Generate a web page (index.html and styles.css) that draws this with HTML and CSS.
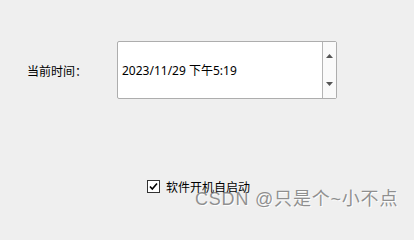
FILE: index.html
```html
<!DOCTYPE html>
<html>
<head>
<meta charset="utf-8">
<link rel="stylesheet" href="styles.css">
</head>
<body>
<div class="page">
  <div class="row">
    <div class="label">当前时间：</div>
    <div class="spin">
      <div class="spin-text">2023/11/29 下午5:19</div>
      <div class="spin-btns">
        <div class="btn"><svg width="7" height="4" viewBox="0 0 7 4"><path d="M0 4 L3.5 0 L7 4 Z" fill="#555"/></svg></div>
        <div class="btn"><svg width="7" height="4" viewBox="0 0 7 4"><path d="M0 0 L3.5 4 L7 0 Z" fill="#555"/></svg></div>
      </div>
    </div>
  </div>
  <div class="check-row">
    <div class="checkbox"><svg width="13" height="13" viewBox="0 0 13 13"><rect x="0.5" y="0.5" width="12" height="12" fill="#fff" stroke="#333"/><path d="M3 6.5 L5.3 9 L10 3.5" fill="none" stroke="#000" stroke-width="1.6"/></svg></div>
    <div class="check-label">软件开机自启动</div>
  </div>
</div>
<div class="watermark">CSDN @只是个~小不点</div>
</body>
</html>
```
FILE: styles.css
```css
html, body {
  margin: 0;
  padding: 0;
  background: #efefef;
  width: 414px;
  height: 214px;
  overflow: hidden;
  font-family: "Noto Sans", "Noto Sans CJK SC", sans-serif;
  color: #000;
}
.page {
  display: flex;
  flex-direction: column;
  padding-top: 41px;
}
.row {
  display: flex;
  align-items: center;
  padding-left: 27px;
}
.label {
  width: 90px;
  font-size: 12px;
  font-family: "Noto Sans CJK SC", sans-serif;
}
.spin {
  width: 220px;
  height: 58px;
  box-sizing: border-box;
  border: 1px solid #adadad;
  border-radius: 2px;
  background: #fff;
  display: flex;
}
.spin-text {
  flex: 1;
  display: flex;
  align-items: center;
  padding-left: 4px;
  font-size: 12px;
  font-family: "Noto Sans", "Noto Sans CJK SC", sans-serif;
}
.spin-btns {
  width: 13px;
  border-left: 1px solid #b5b5b5;
  background: #fafafa;
  display: flex;
  flex-direction: column;
}
.btn {
  flex: 1;
  display: flex;
  align-items: center;
  justify-content: center;
}
.check-row {
  display: flex;
  align-items: center;
  margin-top: 79px;
  padding-left: 147px;
  gap: 6px;
}
.checkbox {
  width: 13px;
  height: 13px;
  display: flex;
}
.check-label {
  font-size: 12px;
  font-family: "Noto Sans CJK SC", sans-serif;
}
.watermark {
  position: absolute;
  left: 195px;
  top: 184px;
  font-size: 18px;
  letter-spacing: 0.8px;
  font-family: "Liberation Sans", "Noto Sans CJK SC", sans-serif;
  color: rgba(110, 110, 110, 0.75);
  text-shadow: 1px 1px 0 rgba(255,255,255,0.9);
  white-space: nowrap;
}
```
